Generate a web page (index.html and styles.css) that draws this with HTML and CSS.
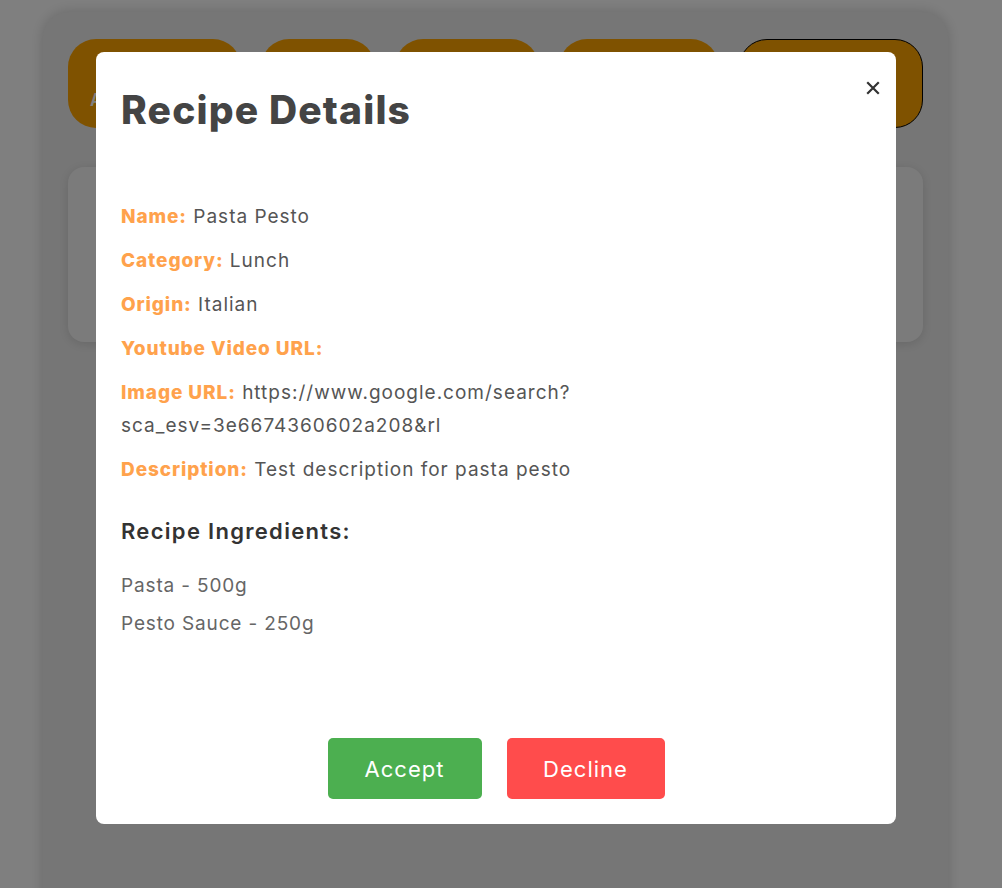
FILE: index.html
```html
<!DOCTYPE html>
<html lang="en">
<head>
<meta charset="utf-8">
<title>Recipe Details</title>
<link rel="stylesheet" href="styles.css">
</head>
<body>
<div class="page">
  <div class="tabs">
    <button class="tab tab-1">All Recipes</button>
    <button class="tab tab-2">Lunch</button>
    <button class="tab tab-3">Dinner</button>
    <button class="tab tab-4">Dessert</button>
    <button class="tab tab-5 active">Pending</button>
  </div>
  <div class="card"></div>
</div>

<div class="overlay"></div>

<div class="modal">
  <button class="close" aria-label="Close">
    <svg width="14" height="14" viewBox="0 0 14 14"><path d="M2 2 L12 12 M12 2 L2 12" stroke="#333" stroke-width="2.2" stroke-linecap="square"/></svg>
  </button>
  <h2 class="modal-title">Recipe Details</h2>
  <div class="fields">
    <p class="field"><span class="label">Name:</span> Pasta Pesto</p>
    <p class="field"><span class="label">Category:</span> Lunch</p>
    <p class="field"><span class="label">Origin:</span> Italian</p>
    <p class="field"><span class="label">Youtube Video URL:</span> </p>
    <p class="field"><span class="label">Image URL:</span> https://www.google.com/search?<br>sca_esv=3e6674360602a208&amp;rl</p>
    <p class="field"><span class="label">Description:</span> Test description for pasta pesto</p>
  </div>
  <h3 class="ing-title">Recipe Ingredients:</h3>
  <ul class="ingredients">
    <li>Pasta - 500g</li>
    <li>Pesto Sauce - 250g</li>
  </ul>
  <div class="actions">
    <button class="btn accept">Accept</button>
    <button class="btn decline">Decline</button>
  </div>
</div>
</body>
</html>
```

FILE: styles.css
```css
* { box-sizing: border-box; }

html, body {
  margin: 0;
  padding: 0;
  height: 100%;
  overflow: hidden;
}

body {
  background: #ffffff;
  font-family: Inter, "Open Sans", "Liberation Sans", sans-serif;
}

.page {
  margin: 12px 0 0 43px;
  width: 905px;
  min-height: 900px;
  background: #ececec;
  border-radius: 26px 26px 0 0;
  padding: 27px 25px;
  box-shadow: 0 0 14px rgba(0, 0, 0, 0.18);
}

.tabs {
  display: flex;
  gap: 20px;
}

.tab {
  height: 89px;
  border: none;
  border-radius: 28px;
  background: #ffa500;
  color: #ffffff;
  font-family: inherit;
  font-size: 17px;
  font-weight: 600;
  text-align: left;
  padding: 0 22px 16px;
  line-height: 24px;
  display: flex;
  align-items: flex-end;
  white-space: nowrap;
  overflow: hidden;
}

.tab-1 { width: 173px; }
.tab-2 { width: 114px; }
.tab-3 { width: 144px; }
.tab-4 { width: 160px; }
.tab-5 { width: 184px; }
.tab.active { border: 1px solid #000; }

.card {
  margin-top: 39px;
  height: 175px;
  background: #f6f6f6;
  border-radius: 16px;
  box-shadow: 0 2px 10px rgba(0, 0, 0, 0.12);
}

.overlay {
  position: fixed;
  inset: 0;
  background: rgba(0, 0, 0, 0.5);
}

.modal {
  position: fixed;
  top: 52px;
  left: 96px;
  width: 800px;
  height: 772px;
  background: #ffffff;
  border-radius: 8px;
  padding: 25px;
  display: flex;
  flex-direction: column;
}

.close {
  position: absolute;
  top: 25px;
  right: 12px;
  width: 22px;
  height: 22px;
  padding: 4px;
  border: none;
  background: transparent;
  display: flex;
  align-items: center;
  justify-content: center;
}

.modal-title {
  margin: 9px 0 0;
  font-size: 39px;
  line-height: 48px;
  font-weight: 800;
  color: #444444;
  letter-spacing: 1.15px;
}

.fields {
  margin-top: 66px;
}

.field {
  margin: 0 0 11px;
  font-size: 19px;
  line-height: 33px;
  color: #555555;
  letter-spacing: 1px;
}

.label {
  color: #ffa24c;
  font-weight: 800;
  letter-spacing: 0.9px;
}

.ing-title {
  margin: 18px 0 0;
  font-size: 22px;
  line-height: 33px;
  font-weight: 600;
  color: #333333;
  letter-spacing: 1.3px;
}

.ingredients {
  list-style: none;
  margin: 19px 0 0;
  padding: 0;
}

.ingredients li {
  font-size: 19px;
  line-height: 38px;
  color: #666666;
  letter-spacing: 0.85px;
}

.actions {
  margin-top: auto;
  display: flex;
  justify-content: center;
  gap: 25px;
}

.btn {
  height: 61px;
  border: none;
  border-radius: 5px;
  color: #ffffff;
  font-family: inherit;
  font-size: 22px;
  font-weight: 400;
  letter-spacing: 1px;
}

.accept { width: 154px; background: #4caf50; }
.decline { width: 158px; background: #ff4c4c; }
```
